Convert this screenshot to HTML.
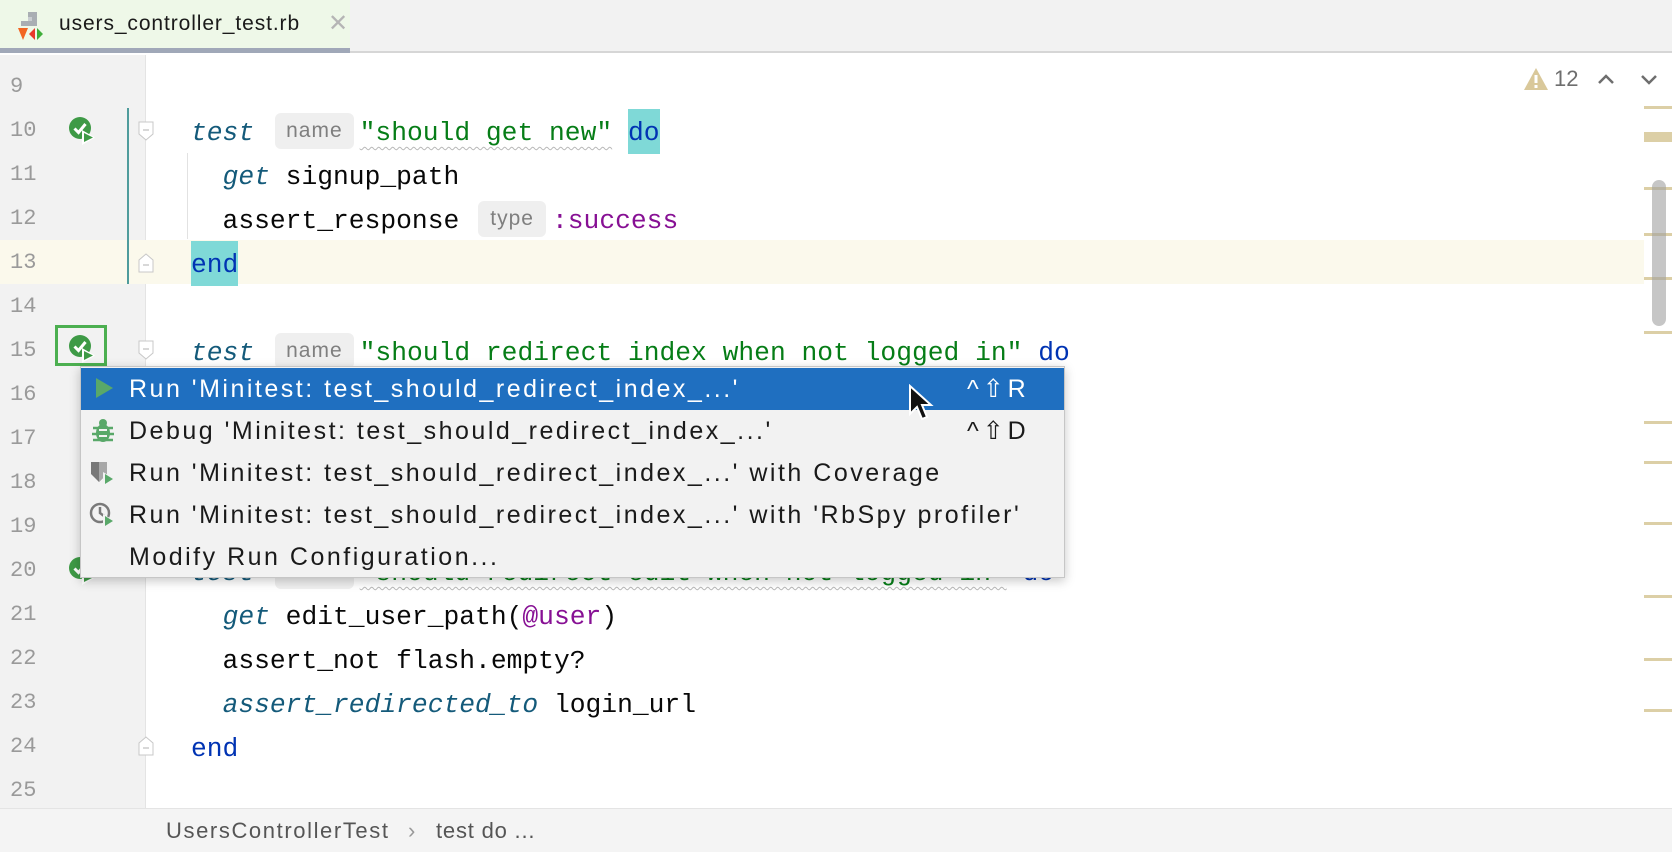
<!DOCTYPE html>
<html><head><meta charset="utf-8"><style>
*{margin:0;padding:0;box-sizing:border-box}
body{width:1672px;height:852px;overflow:hidden;background:#fff;position:relative;font-family:"Liberation Sans",sans-serif}
.abs{position:absolute}
.ln{position:absolute;left:10px;width:40px;font:22px "Liberation Mono",monospace;color:#9a9a9a;height:44px;line-height:44px;padding-top:2px}
.code{position:absolute;left:191px;height:44px;font:26.3px "Liberation Mono",monospace;line-height:44px;padding-top:4px;color:#080808;white-space:pre}
.kw{color:#0033b3}
.it{font-style:italic;color:#145a7a}
.str{color:#067d17;text-decoration:underline wavy #b8b8b8;text-decoration-thickness:1px;text-underline-offset:6px}
.sym{color:#871094}
.hint{display:inline-block;height:36px;vertical-align:middle;padding:0 11px;background:#efefef;border-radius:6px;font:21px "Liberation Sans",sans-serif;line-height:36px;letter-spacing:1px;color:#7f7f7f;margin:-4px 6px 0 21px}
.hl{background:#7fd9d7;padding:9px 0 6px}
.fold{position:absolute;left:138px;width:16px;height:20px}
.pm{position:absolute;left:0;font-size:25px;letter-spacing:2.5px;color:#1a1a1a;white-space:nowrap}
.row{position:absolute;left:0;width:983px;height:42px;line-height:42px}
.mk{position:absolute;left:1644px;width:28px;height:3px;background:#dccfa6}
</style></head><body>
<!-- tab bar -->
<div class="abs" style="left:0;top:0;width:1672px;height:53px;background:#f2f2f2;border-bottom:2px solid #d6d6d6"></div>
<div class="abs" style="left:0;top:0;width:350px;height:53px;background:#eef8e8;border-bottom:5px solid #a0a8b8"></div>
<svg class="abs" style="left:16px;top:11px" width="32" height="32" viewBox="0 0 32 32">
<rect x="12" y="1" width="9" height="9" fill="#a9aeb3"/><rect x="5" y="10" width="16" height="5" fill="#a9aeb3"/><rect x="12" y="6" width="4" height="4" fill="#c9cdd1"/>
<polygon points="2,17 12,17 7,29" fill="#f26522"/><polygon points="19,17 19,29 13,23" fill="#e8392b"/><polygon points="21,17 21,29 27,23" fill="#3fae3a"/>
</svg>
<div class="abs" style="left:59px;top:12px;font-size:21px;letter-spacing:0.9px;color:#1a1a1a">users_controller_test.rb</div>
<div class="abs" style="left:328px;top:9px;font-size:24px;color:#b5b5b5">✕</div>

<!-- gutter -->
<div class="abs" style="left:0;top:55px;width:146px;height:753px;background:#f2f2f2;border-right:1px solid #e4e4e4"></div>
<!-- current line -->
<div class="abs" style="left:0;top:240px;width:1644px;height:44px;background:#fbf9ec"></div>
<div class="abs" style="left:127px;top:108px;width:2px;height:176px;background:#4f9c9c"></div>
<div class="abs" style="left:187px;top:153px;width:1px;height:86px;background:#e2e2e2"></div>

<!-- line numbers -->
<div class="ln" style="top:63px">9</div>
<div class="ln" style="top:107px">10</div>
<div class="ln" style="top:151px">11</div>
<div class="ln" style="top:195px">12</div>
<div class="ln" style="top:239px">13</div>
<div class="ln" style="top:283px">14</div>
<div class="ln" style="top:327px">15</div>
<div class="ln" style="top:371px">16</div>
<div class="ln" style="top:415px">17</div>
<div class="ln" style="top:459px">18</div>
<div class="ln" style="top:503px">19</div>
<div class="ln" style="top:547px">20</div>
<div class="ln" style="top:591px">21</div>
<div class="ln" style="top:635px">22</div>
<div class="ln" style="top:679px">23</div>
<div class="ln" style="top:723px">24</div>
<div class="ln" style="top:767px">25</div>

<!-- run icons -->
<svg width="0" height="0" style="position:absolute"><defs><g id="ri">
<circle cx="12" cy="12" r="11" fill="#3e9a46"/>
<path d="M6.5 12.5 L10.5 16.5 L17.5 8" fill="none" stroke="#fff" stroke-width="3"/>
<polygon points="14,14 27,21.5 14,29" fill="#fff"/>
<polygon points="16,17 25,21.5 16,26" fill="#3e9a46"/>
</g></defs></svg>
<svg class="abs" style="left:68px;top:116px" width="30" height="32"><use href="#ri"/></svg>
<div class="abs" style="left:55px;top:325px;width:52px;height:41px;border:3px solid #4caf50"></div>
<svg class="abs" style="left:68px;top:334px" width="30" height="32"><use href="#ri"/></svg>
<svg class="abs" style="left:68px;top:556px" width="30" height="32"><use href="#ri"/></svg>

<!-- folds -->
<svg class="fold" style="top:121px" viewBox="0 0 16 20"><path d="M1 1H15V13L8 19L1 13Z" fill="#fff" stroke="#c8c8c8"/><path d="M5 9H11" stroke="#b0b0b0"/></svg>
<svg class="fold" style="top:253px" viewBox="0 0 16 20"><path d="M1 19H15V7L8 1L1 7Z" fill="#fff" stroke="#c8c8c8"/><path d="M5 12H11" stroke="#b0b0b0"/></svg>
<svg class="fold" style="top:340px" viewBox="0 0 16 20"><path d="M1 1H15V13L8 19L1 13Z" fill="#fff" stroke="#c8c8c8"/><path d="M5 9H11" stroke="#b0b0b0"/></svg>
<svg class="fold" style="top:736px" viewBox="0 0 16 20"><path d="M1 19H15V7L8 1L1 7Z" fill="#fff" stroke="#c8c8c8"/><path d="M5 12H11" stroke="#b0b0b0"/></svg>

<!-- code -->
<div class="code" style="top:107px"><span class="it">test</span><span class="hint">name</span><span class="str">"should get new"</span> <span class="kw hl">do</span></div>
<div class="code" style="top:151px">  <span class="it">get</span> signup_path</div>
<div class="code" style="top:195px">  assert_response<span class="hint" style="padding:0 12px;margin-left:19px">type</span><span class="sym">:success</span></div>
<div class="code" style="top:239px"><span class="kw hl">end</span></div>
<div class="code" style="top:327px"><span class="it">test</span><span class="hint">name</span><span class="str">"should redirect index when not logged in"</span> <span class="kw">do</span></div>
<div class="code" style="top:371px">  <span class="it">get</span> users_path</div>
<div class="code" style="top:415px">  assert_not flash.empty?</div>
<div class="code" style="top:459px">  <span class="it">assert_redirected_to</span> login_url</div>
<div class="code" style="top:503px"><span class="kw">end</span></div>
<div class="code" style="top:547px"><span class="it">test</span><span class="hint">name</span><span class="str">"should redirect edit when not logged in"</span> <span class="kw">do</span></div>
<div class="code" style="top:591px">  <span class="it">get</span> edit_user_path(<span class="sym">@user</span>)</div>
<div class="code" style="top:635px">  assert_not flash.empty?</div>
<div class="code" style="top:679px">  <span class="it">assert_redirected_to</span> login_url</div>
<div class="code" style="top:723px"><span class="kw">end</span></div>

<!-- top right -->
<svg class="abs" style="left:1524px;top:68px" width="24" height="22" viewBox="0 0 24 22"><polygon points="12,0 24,22 0,22" fill="#d9c89a"/><rect x="10.5" y="7" width="3" height="8" fill="#fff"/><rect x="10.5" y="17" width="3" height="3" fill="#fff"/></svg>
<div class="abs" style="left:1554px;top:66px;font-size:22px;color:#6e6e6e">12</div>
<svg class="abs" style="left:1596px;top:72px" width="20" height="14"><path d="M3 11L10 4L17 11" fill="none" stroke="#6e6e6e" stroke-width="2.5"/></svg>
<svg class="abs" style="left:1639px;top:73px" width="20" height="14"><path d="M3 3L10 10L17 3" fill="none" stroke="#6e6e6e" stroke-width="2.5"/></svg>

<!-- scrollbar markers -->
<div class="mk" style="top:106px"></div>
<div class="mk" style="top:132px;height:10px"></div>
<div class="mk" style="top:187px"></div>
<div class="mk" style="top:233px"></div>
<div class="mk" style="top:277px"></div>
<div class="mk" style="top:331px"></div>
<div class="mk" style="top:421px"></div>
<div class="mk" style="top:461px"></div>
<div class="mk" style="top:522px"></div>
<div class="mk" style="top:595px"></div>
<div class="mk" style="top:658px"></div>
<div class="mk" style="top:709px"></div>
<div class="abs" style="left:1652px;top:180px;width:14px;height:146px;border-radius:7px;background:rgba(160,160,160,0.6)"></div>

<!-- popup -->
<div class="abs" style="left:80px;top:366px;width:985px;height:212px;background:#f2f2f2;border:1px solid #c6c6c6;box-shadow:0 3px 10px rgba(0,0,0,0.22)">
 <div class="row" style="top:1px;background:#1f6fc0"></div>
 <svg class="abs" style="left:12px;top:10px" width="22" height="22"><polygon points="3,1 20,11 3,21" fill="#59a869"/></svg>
 <div class="pm" style="left:48px;top:0;line-height:44px;color:#fff">Run 'Minitest: test_should_redirect_index_...'</div>
 <div class="pm" style="left:886px;top:0;line-height:44px;color:#fff;letter-spacing:4px">^⇧R</div>
 <svg class="abs" style="left:10px;top:51px" width="24" height="26" viewBox="0 0 24 26"><ellipse cx="12" cy="15" rx="7" ry="9" fill="#59a869"/><circle cx="12" cy="5" r="4" fill="#59a869"/><path d="M2 10H22M1 16H23M2 22H22" stroke="#59a869" stroke-width="2.5"/><path d="M8 12H16M8 18H16" stroke="#f2f2f2" stroke-width="2"/></svg>
 <div class="pm" style="left:48px;top:43px;line-height:42px">Debug 'Minitest: test_should_redirect_index_...'</div>
 <div class="pm" style="left:886px;top:43px;line-height:42px;letter-spacing:4px">^⇧D</div>
 <svg class="abs" style="left:8px;top:93px" width="28" height="28" viewBox="0 0 28 28"><path d="M2 2H18V14L10 22L2 14Z" fill="#787878"/><path d="M10 2H18V14L10 22Z" fill="#a8a8a8"/><polygon points="14,12 26,19 14,26" fill="#f2f2f2"/><polygon points="16,14 24,19 16,24" fill="#59a869"/></svg>
 <div class="pm" style="left:48px;top:85px;line-height:42px">Run 'Minitest: test_should_redirect_index_...' with Coverage</div>
 <svg class="abs" style="left:8px;top:135px" width="28" height="28" viewBox="0 0 28 28"><circle cx="11" cy="11" r="9" fill="none" stroke="#7a7a7a" stroke-width="2.5"/><path d="M11 5V11L15 14" stroke="#7a7a7a" stroke-width="2.5" fill="none"/><polygon points="14,12 26,19 14,26" fill="#f2f2f2"/><polygon points="16,14 24,19 16,24" fill="#59a869"/></svg>
 <div class="pm" style="left:48px;top:127px;line-height:42px">Run 'Minitest: test_should_redirect_index_...' with 'RbSpy profiler'</div>
 <div class="pm" style="left:48px;top:169px;line-height:42px">Modify Run Configuration...</div>
</div>
<!-- cursor -->
<svg class="abs" style="left:908px;top:384px" width="26" height="38" viewBox="0 0 26 38"><path d="M2 2V30L9 23L14 35L19 33L14 21H23Z" fill="#111" stroke="#fff" stroke-width="2"/></svg>

<!-- breadcrumb -->
<div class="abs" style="left:0;top:808px;width:1672px;height:44px;background:#f4f4f4;border-top:1px solid #e4e4e4"></div>
<div class="abs" style="left:166px;top:818px;font-size:22px;letter-spacing:1.6px;color:#555">UsersControllerTest</div>
<div class="abs" style="left:408px;top:818px;font-size:22px;color:#999">›</div>
<div class="abs" style="left:436px;top:818px;font-size:22px;letter-spacing:0.8px;color:#555">test do ...</div>
</body></html>
